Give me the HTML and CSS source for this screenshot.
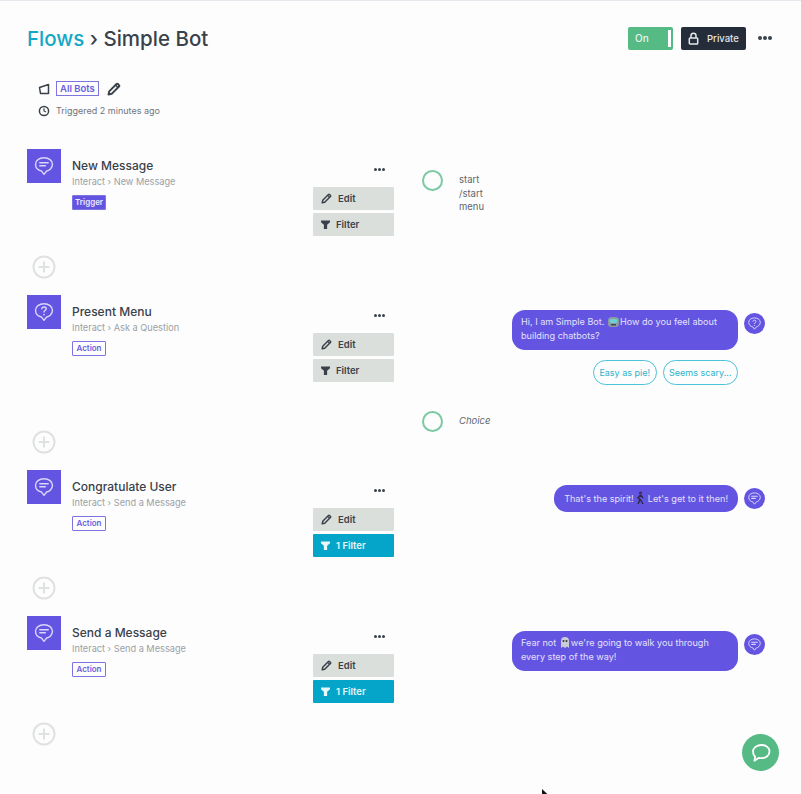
FILE: index.html
```html
<!DOCTYPE html>
<html lang="en">
<head>
    <meta charset="UTF-8">
    <meta name="viewport" content="width=device-width, initial-scale=1.0">
    <title>Simple Bot</title>
    <link rel="stylesheet" href="styles.css">
</head>
<body>
    <svg class="defs" width="0" height="0">
        <symbol id="bubble-lines" viewBox="0 0 20 20">
            <path d="M10 2.5c4.4 0 7.7 2.6 7.7 6s-3 5.7-5.3 6.1L10 17.6l-2.2-3C5 14.1 2.3 12 2.3 8.5s3.3-6 7.7-6z" fill="none" stroke="currentColor" stroke-width="1.3" stroke-linejoin="round"/>
            <path d="M6.2 7h7.6M6.2 9.8h5" fill="none" stroke="currentColor" stroke-width="1.4" stroke-linecap="round"/>
        </symbol>
        <symbol id="bubble-question" viewBox="0 0 20 20">
            <path d="M10 2.5c4.4 0 7.7 2.6 7.7 6s-3 5.7-5.3 6.1L10 17.6l-2.2-3C5 14.1 2.3 12 2.3 8.5s3.3-6 7.7-6z" fill="none" stroke="currentColor" stroke-width="1.3" stroke-linejoin="round"/>
            <path d="M8 7c.2-1 1-1.500 2-1.500 1.200 0 2 .7 2 1.600 0 1.500-2 1.500-2 3" fill="none" stroke="currentColor" stroke-width="1.3" stroke-linecap="round"/>
            <circle cx="10" cy="12.3" r=".8" fill="currentColor"/>
        </symbol>
        <symbol id="pencil" viewBox="0 0 14 14">
            <path d="M1.5 12.5l.7-3.200 7.300-7.300a1 1 0 0 1 1.400 0l1.100 1.100a1 1 0 0 1 0 1.400l-7.300 7.300z" fill="none" stroke="currentColor" stroke-width="1.9" stroke-linejoin="round"/>
            <path d="M8.500 3l2.500 2.500" stroke="currentColor" stroke-width="1.5"/>
        </symbol>
        <symbol id="funnel" viewBox="0 0 10 10">
            <path d="M0 .5h10v2L6.800 5.200V10H3.200V5.200L0 2.500z" fill="currentColor"/>
        </symbol>
        <symbol id="plus-circle" viewBox="0 0 24 24">
            <circle cx="12" cy="12" r="10.5" fill="none" stroke="currentColor" stroke-width="2"/>
            <path d="M12 6.500v11M6.500 12h11" stroke="currentColor" stroke-width="2"/>
        </symbol>
    </svg>

    <header class="page-head">
        <h1><a href="#">Flows</a> <span class="crumb">&rsaquo;</span> Simple Bot</h1>
        <div class="head-actions">
            <div class="toggle">On<span class="toggle-knob"></span></div>
            <button class="btn-private">
                <svg width="11" height="13" viewBox="0 0 11 13"><path d="M3 6V3.800a2.500 2.500 0 0 1 5 0V6" fill="none" stroke="currentColor" stroke-width="1.5"/><rect x="1.300" y="6" width="8.400" height="6" rx=".8" fill="none" stroke="currentColor" stroke-width="1.5"/></svg>
                Private
            </button>
            <div class="dots dots-big"><i></i><i></i><i></i></div>
        </div>
    </header>

    <div class="meta">
        <div class="meta-row">
            <svg class="meta-icon" width="12" height="12" viewBox="0 0 12 12"><path d="M1.500 4.500L10.500 1.500V10.500H2.500z" fill="none" stroke="#3a4149" stroke-width="1.5" stroke-linejoin="round"/></svg>
            <a class="tag-link" href="#">All Bots</a>
            <svg class="meta-pencil" width="14" height="14"><use href="#pencil"/></svg>
        </div>
        <div class="meta-row meta-time">
            <svg class="meta-icon" width="12" height="12" viewBox="0 0 12 12"><circle cx="6" cy="6" r="4.600" fill="none" stroke="#3a4149" stroke-width="1.5"/><path d="M6 3.200V6l2 1" fill="none" stroke="#3a4149" stroke-width="1.200"/></svg>
            Triggered 2 minutes ago
        </div>
    </div>

    <section class="step">
        <div class="step-icon"><svg width="22" height="22"><use href="#bubble-lines"/></svg></div>
        <div class="step-info">
            <h2>New Message</h2>
            <p>Interact &rsaquo; New Message</p>
            <span class="badge badge-trigger">Trigger</span>
        </div>
        <div class="step-actions">
            <div class="dots"><i></i><i></i><i></i></div>
            <button class="btn-grey"><svg width="11" height="11"><use href="#pencil"/></svg>Edit</button>
            <button class="btn-grey"><svg width="9" height="9"><use href="#funnel"/></svg>Filter</button>
        </div>
        <div class="step-output">
            <div class="output-row">
                <span class="ring"></span>
                <div class="output-text">start<br>/start<br>menu</div>
            </div>
        </div>
        <div class="step-add"><svg width="24" height="24"><use href="#plus-circle"/></svg></div>
    </section>

    <section class="step">
        <div class="step-icon"><svg width="22" height="22"><use href="#bubble-question"/></svg></div>
        <div class="step-info">
            <h2>Present Menu</h2>
            <p>Interact &rsaquo; Ask a Question</p>
            <span class="badge">Action</span>
        </div>
        <div class="step-actions">
            <div class="dots"><i></i><i></i><i></i></div>
            <button class="btn-grey"><svg width="11" height="11"><use href="#pencil"/></svg>Edit</button>
            <button class="btn-grey"><svg width="9" height="9"><use href="#funnel"/></svg>Filter</button>
        </div>
        <div class="step-output">
            <div class="say">
                <div class="say-bubble say-wide">Hi, I am Simple Bot. <svg class="emoji" width="13" height="13" viewBox="0 0 13 13"><rect x="1" y="2" width="11" height="10" rx="3.500" fill="#8d9aa3"/><rect x="2.500" y="4" width="8" height="4" rx="2" fill="#6fd0d6"/><rect x="4" y="9" width="5" height="1.500" fill="#3c4650"/></svg>How do you feel about building chatbots?</div>
                <div class="say-avatar"><svg width="15" height="15"><use href="#bubble-question"/></svg></div>
            </div>
            <div class="replies">
                <span class="reply">Easy as pie!</span>
                <span class="reply">Seems scary...</span>
            </div>
            <div class="output-row output-choice">
                <span class="ring"></span>
                <div class="output-text"><em>Choice</em></div>
            </div>
        </div>
        <div class="step-add"><svg width="24" height="24"><use href="#plus-circle"/></svg></div>
    </section>

    <section class="step">
        <div class="step-icon"><svg width="22" height="22"><use href="#bubble-lines"/></svg></div>
        <div class="step-info">
            <h2>Congratulate User</h2>
            <p>Interact &rsaquo; Send a Message</p>
            <span class="badge">Action</span>
        </div>
        <div class="step-actions">
            <div class="dots"><i></i><i></i><i></i></div>
            <button class="btn-grey"><svg width="11" height="11"><use href="#pencil"/></svg>Edit</button>
            <button class="btn-blue"><svg width="9" height="9"><use href="#funnel"/></svg>1 Filter</button>
        </div>
        <div class="step-output">
            <div class="say">
                <div class="say-bubble say-short">That's the spirit! <svg class="emoji" width="9" height="14" viewBox="0 0 9 14"><circle cx="4.500" cy="2" r="1.600" fill="#3c3350"/><path d="M4.500 4L2 7l2 1.500L2 13M4.500 4L7 7M4.300 8.500L7 13" fill="none" stroke="#2e2a3d" stroke-width="1.400"/></svg> Let's get to it then!</div>
                <div class="say-avatar"><svg width="15" height="15"><use href="#bubble-lines"/></svg></div>
            </div>
        </div>
        <div class="step-add"><svg width="24" height="24"><use href="#plus-circle"/></svg></div>
    </section>

    <section class="step">
        <div class="step-icon"><svg width="22" height="22"><use href="#bubble-lines"/></svg></div>
        <div class="step-info">
            <h2>Send a Message</h2>
            <p>Interact &rsaquo; Send a Message</p>
            <span class="badge">Action</span>
        </div>
        <div class="step-actions">
            <div class="dots"><i></i><i></i><i></i></div>
            <button class="btn-grey"><svg width="11" height="11"><use href="#pencil"/></svg>Edit</button>
            <button class="btn-blue"><svg width="9" height="9"><use href="#funnel"/></svg>1 Filter</button>
        </div>
        <div class="step-output">
            <div class="say">
                <div class="say-bubble say-wide">Fear not <svg class="emoji" width="12" height="13" viewBox="0 0 12 13"><path d="M2 12V5a4 4 0 0 1 8 0v7l-2-1.500L6 12l-2-1.500z" fill="#c9cdd6"/><circle cx="4.500" cy="5" r="1" fill="#333"/><circle cx="7.500" cy="5" r="1" fill="#333"/></svg>we're going to walk you through every step of the way!</div>
                <div class="say-avatar"><svg width="15" height="15"><use href="#bubble-lines"/></svg></div>
            </div>
        </div>
        <div class="step-add"><svg width="24" height="24"><use href="#plus-circle"/></svg></div>
    </section>

    <div class="chat-fab">
        <svg width="22" height="22" viewBox="0 0 22 22"><path d="M11.500 3c4.700 0 8 2.900 8 6.600s-3.300 6.500-8 6.500c-.9 0-1.800-.1-2.600-.3L4.500 18.800l.6-4.200C3.500 13.300 3 11.600 3 9.600 3 5.900 6.800 3 11.500 3z" fill="none" stroke="#fff" stroke-width="1.800" stroke-linejoin="round"/></svg>
    </div>
    <svg class="cursor" width="10" height="14" viewBox="0 0 10 14"><path d="M0 0l8.500 8H4.500L0 12z" fill="#111"/></svg>
</body>
</html>
```

FILE: styles.css
```css
html {
    height: 100%;
}
body {
    position: relative;
    height: 794px;
    margin: 0;
    overflow: hidden;
    box-sizing: border-box;
    padding: 0 36px 0 27px;
    border-top: 1px solid #e6e8ee;
    background-color: #fdfdfd;
    color: #39414a;
    font-family: Inter, "Liberation Sans", sans-serif;
}
.defs {
    position: absolute;
}
button {
    font-family: inherit;
    border: none;
    cursor: pointer;
}
.page-head {
    display: flex;
    align-items: center;
    justify-content: space-between;
    height: 26px;
    padding-top: 24px;
}
.page-head h1 {
    margin: 0;
    font-size: 20.5px;
    font-weight: 500;
    color: #39414a;
}
.page-head h1 a {
    color: #12a8c6;
    text-decoration: none;
}
.head-actions {
    display: flex;
    align-items: center;
    margin-right: -7px;
}
.toggle {
    display: flex;
    align-items: center;
    justify-content: space-between;
    box-sizing: border-box;
    width: 45px;
    height: 23px;
    padding: 0 2px 0 7px;
    border-radius: 2px;
    background-color: #56ba85;
    color: #e6f5ed;
    font-size: 10px;
    font-weight: 500;
}
.toggle-knob {
    width: 3px;
    height: 17px;
    background-color: #fff;
}
.btn-private {
    display: flex;
    align-items: center;
    gap: 8px;
    width: 65px;
    height: 23px;
    margin-left: 8px;
    padding: 0 0 0 7px;
    border-radius: 2px;
    background-color: #252d3a;
    color: #e6e8ea;
    font-size: 9.5px;
    font-weight: 500;
}
.dots {
    display: flex;
    gap: 1px;
}
.dots i {
    width: 3px;
    height: 3px;
    border-radius: 50%;
    background-color: #39414a;
}
.dots-big {
    margin-left: 12px;
}
.dots-big i {
    width: 4px;
    height: 4px;
}
.meta {
    margin: 29px 0 0 11px;
    font-size: 9px;
    color: #6f767d;
}
.meta-row {
    display: flex;
    align-items: center;
    height: 17px;
}
.meta-icon {
    margin-right: 6px;
}
.meta-time {
    margin-top: 5px;
}
.tag-link {
    padding: 1px 3px;
    border: 1px solid #7d74e0;
    font-size: 9.5px;
    font-weight: 600;
    color: #6a5fe0;
    text-decoration: none;
}
.meta-pencil {
    margin-left: 8px;
    color: #39414a;
}
.step {
    display: grid;
    grid-template-columns: 34px 252px 81px 1fr;
    grid-template-rows: 1fr auto;
    min-height: 146px;
}
.meta + .step {
    margin-top: 30px;
}
.step-icon {
    display: flex;
    align-items: center;
    justify-content: center;
    width: 34px;
    height: 34px;
    background-color: #6354e2;
    color: #d9d6fa;
}
.step-info {
    padding: 8px 0 0 11px;
}
.step-info h2 {
    margin: 0;
    font-size: 12px;
    font-weight: 500;
    line-height: 17px;
    color: #39414a;
}
.step-info p {
    margin: 1px 0 1px;
    font-size: 9.2px;
    line-height: 13px;
    color: #9aa1a6;
}
.badge {
    display: inline-block;
    box-sizing: border-box;
    width: 34px;
    height: 15px;
    border: 1px solid #7d74e0;
    border-radius: 1px;
    font-size: 8px;
    font-weight: 600;
    line-height: 13px;
    text-align: center;
    color: #6a5fe0;
}
.badge-trigger {
    background-color: #6354e2;
    color: #eceafd;
}
.step-actions {
    display: flex;
    flex-direction: column;
    gap: 3px;
}
.step-actions .dots {
    justify-content: flex-end;
    height: 3px;
    margin: 19px 9px 13px 0;
}
.step-actions button {
    display: flex;
    align-items: center;
    gap: 6px;
    width: 81px;
    height: 23px;
    padding: 0 0 0 8px;
    border-radius: 1px;
    font-size: 9.5px;
    font-weight: 600;
}
.btn-grey {
    background-color: #dbdfdb;
    color: #39414a;
}
.btn-blue {
    background-color: #04a5c8;
    color: #e8f7fa;
}
.step-output {
    padding: 0 36px 0 28px;
}
.output-row {
    display: flex;
    margin-top: 21px;
    font-size: 9.5px;
    line-height: 13.5px;
}
.ring {
    box-sizing: border-box;
    width: 21px;
    height: 21px;
    border: 2px solid #7bc9a3;
    border-radius: 50%;
}
.output-text {
    padding: 3px 0 0 16px;
    color: #5f666d;
}
.output-choice {
    margin-top: 26px;
}
.say {
    display: flex;
    justify-content: flex-end;
    gap: 6px;
    margin-top: 15px;
    margin-right: -36px;
}
.say-bubble {
    box-sizing: border-box;
    padding: 5px 9px;
    border-radius: 13px;
    background-color: #6354e2;
    color: #e3e1fa;
    font-size: 9.1px;
    line-height: 14px;
}
.say-wide {
    width: 226px;
    height: 40px;
}
.say-short {
    height: 27px;
    padding: 6px 10px;
    white-space: nowrap;
}
.emoji {
    vertical-align: -3px;
}
.say-avatar {
    display: flex;
    align-items: center;
    justify-content: center;
    width: 21px;
    height: 21px;
    margin-top: 3px;
    border-radius: 50%;
    background-color: #6354e2;
    color: #d9d6fa;
}
.replies {
    display: flex;
    justify-content: flex-end;
    gap: 6px;
    margin: 10px -9px 0 0;
}
.reply {
    box-sizing: border-box;
    height: 25px;
    padding: 0 5.5px;
    border: 1px solid #4cc3d9;
    border-radius: 13px;
    font-size: 9px;
    line-height: 23px;
    color: #2bb3cc;
}
.step-add {
    grid-column: 1 / -1;
    height: 24px;
    margin: -2px 0 16px 5px;
    color: #dfe2e1;
}
.chat-fab {
    position: absolute;
    top: 733px;
    left: 742px;
    display: flex;
    align-items: center;
    justify-content: center;
    width: 37px;
    height: 37px;
    border-radius: 50%;
    background-color: #56ba85;
}
.cursor {
    position: absolute;
    top: 788px;
    left: 542px;
}
```
